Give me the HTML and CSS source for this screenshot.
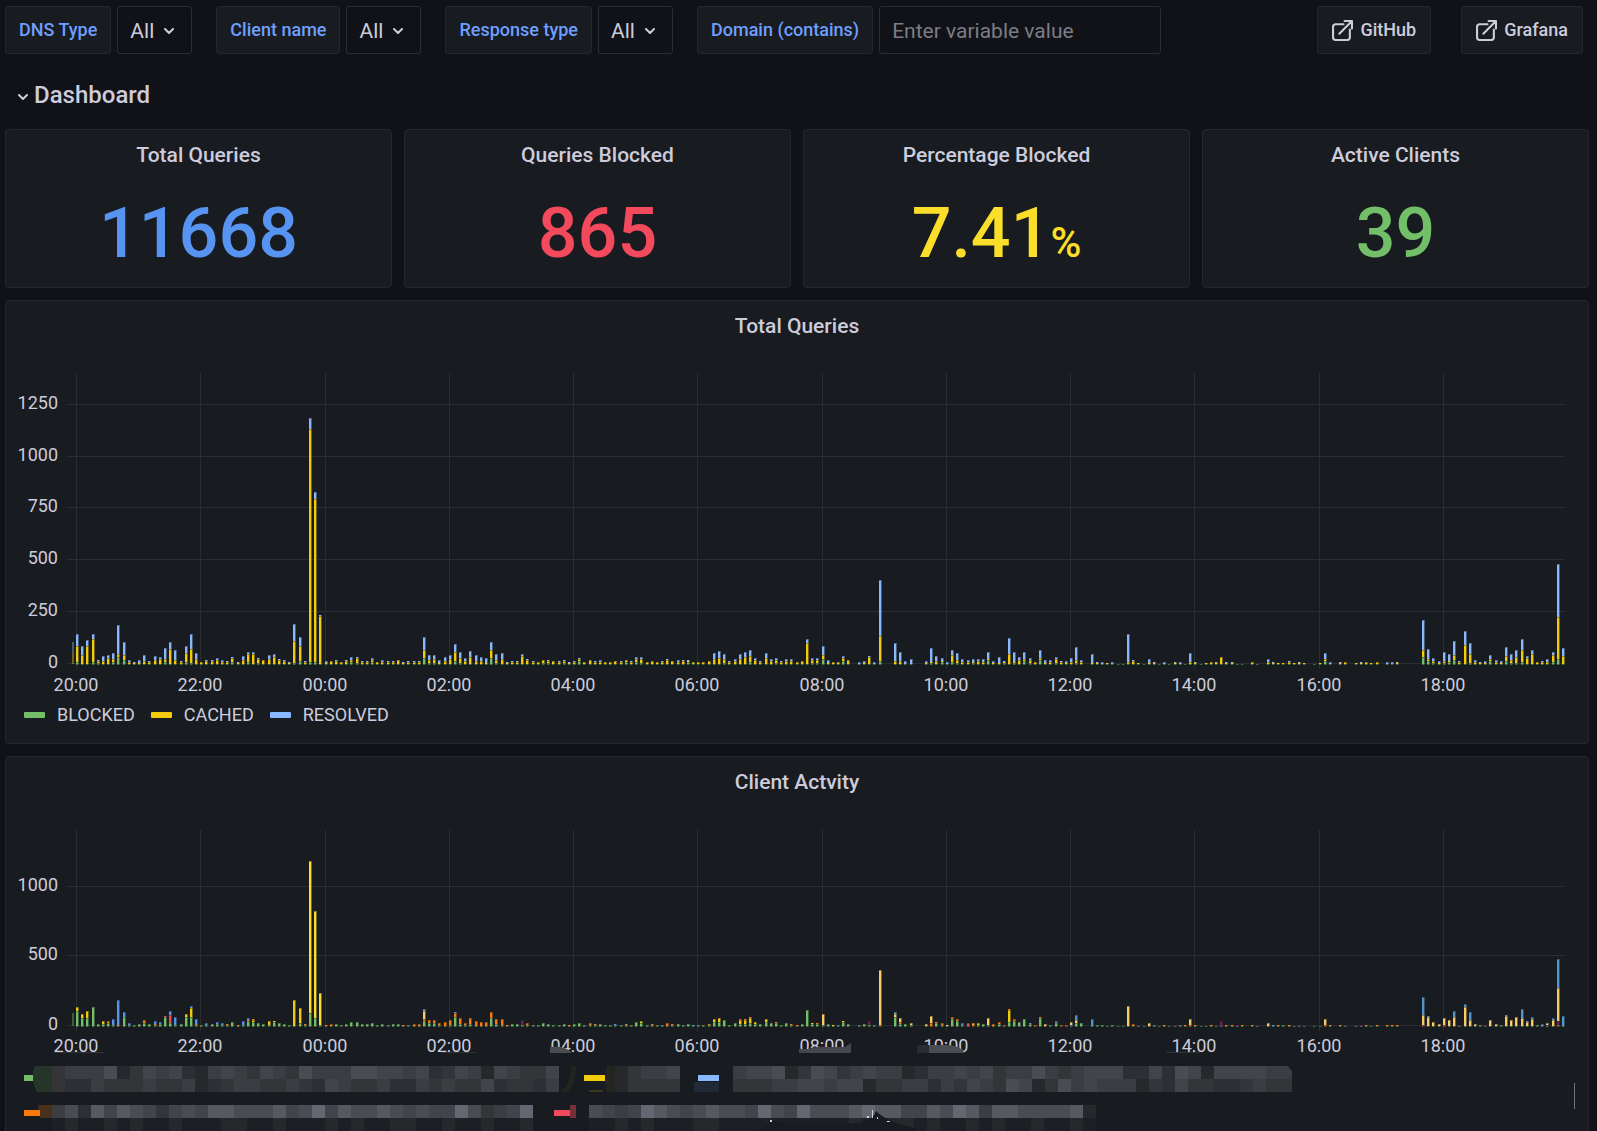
FILE: index.html
```
<!DOCTYPE html>
<html lang="en">
<head>
  <meta charset="utf-8">
  <title>DNS Dashboard</title>
  <link rel="stylesheet" href="styles.css">
</head>
<body>
  <div class="toolbar">
    <div class="variable">
      <label class="variable-label" for="dnsType">DNS Type</label>
      <div class="select-box">
        <select id="dnsType"><option>All</option></select>
        <svg class="chevron" viewBox="0 0 10 6"><path d="M1 1l4 4 4-4"/></svg>
      </div>
    </div>
    <div class="variable">
      <label class="variable-label" for="clientName">Client name</label>
      <div class="select-box">
        <select id="clientName"><option>All</option></select>
        <svg class="chevron" viewBox="0 0 10 6"><path d="M1 1l4 4 4-4"/></svg>
      </div>
    </div>
    <div class="variable">
      <label class="variable-label" for="responseType">Response type</label>
      <div class="select-box">
        <select id="responseType"><option>All</option></select>
        <svg class="chevron" viewBox="0 0 10 6"><path d="M1 1l4 4 4-4"/></svg>
      </div>
    </div>
    <div class="variable">
      <label class="variable-label" for="domain">Domain (contains)</label>
      <input type="text" id="domain" class="text-input" placeholder="Enter variable value">
    </div>
    <div class="links">
      <a class="link-button" href="#github">
        <svg class="icon" viewBox="0 0 20 20"><path d="M11 4H3.500Q1 4 1 6.500V16.500Q1 19 3.500 19H14.500Q17 19 17 16.500V9M7 13L18.500 1.500M12 1H19V8"/></svg>
        GitHub
      </a>
      <a class="link-button" href="#grafana">
        <svg class="icon" viewBox="0 0 20 20"><path d="M11 4H3.500Q1 4 1 6.500V16.500Q1 19 3.500 19H14.500Q17 19 17 16.500V9M7 13L18.500 1.500M12 1H19V8"/></svg>
        Grafana
      </a>
    </div>
  </div>

  <h1 class="row-title">
    <svg class="chevron" viewBox="0 0 10 6"><path d="M1 1l4 4 4-4"/></svg>
    Dashboard
  </h1>

  <div class="stats">
    <div class="panel">
      <h2 class="panel-title">Total Queries</h2>
      <div class="stat-value blue">11668</div>
    </div>
    <div class="panel">
      <h2 class="panel-title">Queries Blocked</h2>
      <div class="stat-value red">865</div>
    </div>
    <div class="panel">
      <h2 class="panel-title">Percentage Blocked</h2>
      <div class="stat-value yellow">7.41<span class="unit">%</span></div>
    </div>
    <div class="panel">
      <h2 class="panel-title">Active Clients</h2>
      <div class="stat-value green">39</div>
    </div>
  </div>

  <div class="panel chart-panel">
    <h2 class="panel-title">Total Queries</h2>
    <svg class="chart" id="queriesChart" height="345"></svg>
    <ul class="legend">
      <li><span class="swatch swatch-blocked"></span>BLOCKED</li>
      <li><span class="swatch swatch-cached"></span>CACHED</li>
      <li><span class="swatch swatch-resolved"></span>RESOLVED</li>
    </ul>
  </div>

  <div class="panel chart-panel">
    <h2 class="panel-title">Client Actvity</h2>
    <svg class="chart" id="clientsChart" height="251"></svg>
    <svg class="hidden-names" id="hiddenNames" height="82"></svg>
    <div class="scroll-thumb"></div>
  </div>

  <script src="charts.js"></script>
</body>
</html>
```

FILE: styles.css
```
:root {
  --background: #111217;
  --panel: #181b1f;
  --border: #25272c;
  --input-border: #2d2e34;
  --text: #ccccdc;
  --link: #6e9fff;
  --blue: #5794f2;
  --red: #f2495c;
  --yellow: #fade2a;
  --green: #73bf69;
}

* {
  box-sizing: border-box;
}

body {
  margin: 0;
  padding: 6px 8px 0 5px;
  height: 100vh;
  overflow: hidden;
  background: var(--background);
  color: var(--text);
  font-family: Roboto, "Liberation Sans", sans-serif;
  font-size: 18px;
}

.toolbar {
  display: flex;
  gap: 24px;
  padding-right: 6px;
}

.variable {
  display: flex;
  gap: 6px;
}

.variable-label, .link-button {
  display: flex;
  align-items: center;
  height: 48px;
  padding: 0 13px 2px;
  background: var(--panel);
  border: 1px solid var(--border);
  border-radius: 3px;
  font-weight: 500;
  white-space: nowrap;
}

.variable-label {
  color: var(--link);
}

.select-box {
  position: relative;
}

.select-box select, .text-input {
  height: 48px;
  padding: 2px 12px 0;
  background: var(--background);
  border: 1px solid var(--input-border);
  border-radius: 3px;
  color: var(--text);
  font-family: inherit;
  font-size: 21px;
}

.select-box select {
  appearance: none;
  width: 75px;
}

.text-input {
  width: 282px;
}

.text-input::placeholder {
  color: #7b7c86;
}

.chevron {
  width: 10px;
  height: 6px;
  fill: none;
  stroke: var(--text);
  stroke-width: 2;
  stroke-linecap: round;
  stroke-linejoin: round;
}

.select-box .chevron {
  position: absolute;
  right: 18px;
  top: 22px;
  pointer-events: none;
}

.links {
  display: flex;
  gap: 30px;
  margin-left: auto;
}

.link-button {
  gap: 7px;
  padding: 0 14px 2px;
  color: var(--text);
  text-decoration: none;
}

.icon {
  width: 21px;
  height: 21px;
  margin-top: 2px;
  fill: none;
  stroke: var(--text);
  stroke-width: 2;
  stroke-linecap: round;
  stroke-linejoin: round;
}

.row-title {
  display: flex;
  align-items: center;
  gap: 6px;
  margin: 24px 0 17px 13px;
  font-size: 24px;
  font-weight: 500;
  line-height: 34px;
}

.row-title .chevron {
  margin-top: 4px;
}

.stats {
  display: grid;
  grid-template-columns: repeat(4, 1fr);
  gap: 12px;
}

.panel {
  background: var(--panel);
  border: 1px solid var(--border);
  border-radius: 4px;
}

.panel-title {
  margin: 0;
  font-size: 21px;
  font-weight: 500;
  line-height: 50px;
  text-align: center;
}

.stat-value {
  height: 107px;
  font-size: 70px;
  font-weight: 500;
  line-height: 106px;
  text-align: center;
}

.unit {
  font-size: 42px;
}

.blue { color: var(--blue); }
.red { color: var(--red); }
.yellow { color: var(--yellow); }
.green { color: var(--green); }

.chart-panel {
  position: relative;
  margin-top: 12px;
}

.chart {
  display: block;
  width: 100%;
}

.chart text {
  fill: var(--text);
  font-size: 18px;
}

.legend {
  display: flex;
  gap: 16px;
  margin: 0;
  padding: 8px 18px 17px;
  list-style: none;
  line-height: 22px;
}

.legend li {
  display: flex;
  align-items: center;
  gap: 12px;
}

.swatch {
  width: 21px;
  height: 6px;
  border-radius: 1px;
}

.swatch-blocked { background: #73bf69; }
.swatch-cached { background: #f2cc0c; }
.swatch-resolved { background: #8ab8ff; }

.hidden-names {
  display: block;
  width: 100%;
}

/* scrollbar of the client legend */
.scroll-thumb {
  position: absolute;
  right: 13px;
  bottom: 31px;
  width: 1px;
  height: 26px;
  background: #707278;
}
```

FILE: charts.js
```
const COLORS = {
  G: '#73bf69', Y: '#f2cc0c', B: '#5794f2', S: '#8ab8ff', O: '#ff780a', R: '#f2495c',
  L: '#fade2a', T: '#f9cb6a', U: '#5195ce', P: '#6d1f62', C: '#64b0c8'
};
const HOURS = ['20:00', '22:00', '00:00', '02:00', '04:00', '06:00', '08:00', '10:00', '12:00', '14:00', '16:00', '18:00'];

// one entry per five minutes from 20:00: blocked,cached,resolved ("-" = no data)
const queries = `
3,16,12 1,9,9 1,18,6 3,23,5 2,2,1 1,3,5 1,6,3 3,3,6 8,3,29 5,5,13 1,2,2 1,1,1
1,1,3 1,3,6 1,2,1 1,4,4 1,5,2 3,3,11 1,15,7 1,4,10 1,2,1 3,9,7 2,14,15 1,5,6
1,2,0 1,3,1 1,3,1 1,4,2 1,2,2 1,2,1 3,4,1 1,1,1 1,4,4 3,8,2 1,10,2 2,4,1
1,4,0 1,5,4 1,7,3 1,4,1 1,3,1 1,1,1 2,22,17 4,15,9 1,2,1 3,233,11 3,163,7 1,48,1
1,1,2 1,3,0 1,3,1 1,2,0 1,3,1 3,2,3 2,5,1 1,2,1 1,2,1 3,2,2 1,2,0 1,2,2
1,2,1 1,2,1 1,4,0 1,1,1 1,2,1 1,2,1 1,2,1 7,8,13 2,3,5 2,4,4 1,1,3 1,3,4
1,5,4 4,9,8 2,5,6 1,3,3 1,7,6 1,3,6 1,3,4 1,1,5 7,8,8 2,3,6 1,5,6 1,1,1
1,2,1 1,2,1 1,8,2 1,4,1 1,2,1 1,2,0 2,3,0 2,2,1 1,3,0 1,2,1 2,2,1 1,1,1
1,2,1 4,2,1 1,2,0 1,4,0 1,2,1 1,2,2 1,2,0 1,2,0 1,3,0 1,2,1 3,2,0 1,2,1
3,3,2 2,4,2 1,2,0 1,3,0 1,2,0 1,2,1 1,4,1 1,3,0 1,2,2 1,3,1 3,1,1 1,2,0
1,2,0 1,2,0 1,3,0 1,5,6 1,6,7 2,4,5 1,2,1 1,3,2 1,5,5 1,7,5 3,6,6 1,4,2
1,2,1 1,6,5 1,3,2 2,3,2 1,2,1 1,3,2 1,3,2 1,2,0 1,3,0 1,21,4 2,3,2 2,3,2
6,4,9 1,1,3 1,2,0 1,2,0 4,3,2 1,4,0 - 1,0,2 1,1,2 1,7,1 1,0,2 4,25,56
- - 1,3,18 1,3,9 1,0,3 1,0,5 - - 1,1,2 2,1,14 1,3,5 3,1,3
1,0,2 3,7,5 2,3,7 1,2,3 1,2,2 2,1,3 1,3,2 1,2,3 5,1,7 1,1,2 1,1,6 2,1,1
1,10,16 2,1,10 1,4,3 4,2,7 2,3,2 1,2,0 5,2,8 1,1,3 1,2,2 2,4,2 1,2,1 1,1,2
1,2,4 2,3,13 1,2,2 - 1,1,9 1,1,1 1,0,2 1,1,0 1,0,2 1,0,0 1,0,0 1,2,28
1,3,1 1,1,0 1,0,0 1,1,4 1,1,1 1,0,0 1,0,2 1,0,0 1,1,1 1,0,2 1,0,0 1,2,9
1,1,1 1,0,0 1,1,0 1,2,0 1,1,1 1,7,0 1,1,1 1,1,1 1,0,0 1,0,0 - 1,2,0
1,0,0 - 1,2,3 1,1,1 1,1,0 1,1,0 1,2,1 1,1,0 1,1,1 1,1,0 - 1,0,0
1,1,0 4,2,6 1,0,2 - 1,1,1 1,2,0 - 1,1,0 1,1,1 1,2,0 1,1,0 1,2,0
- 1,0,2 1,0,2 1,1,1 - - - - 8,7,30 4,2,10 2,2,3 1,1,2
2,2,9 3,1,7 5,5,14 1,2,1 1,19,14 2,9,11 1,2,2 1,1,1 1,1,2 4,2,4 1,2,2 1,1,2
4,5,9 2,3,6 2,6,7 3,12,11 1,6,2 1,10,4 1,2,0 1,2,1 1,2,3 3,7,3 6,42,53 1,8,8`;

// the same slots, stacked by client
const clients = `
G16Y4 G9Y4 G9Y7 G20 G3 G3Y3 G4O2 G2B6 G1O1B25 G10B5 G2B2 G2
G3 G4O3 G3 G2O1B3 G3B2 G10R1 G4O2R6B4 G2B8 G3 G10Y3 G10Y9B2 G2O1B5
G2 G2B2 G3 G3B2 G2B2 G2O1 G5 G1O1 G2B4 G6O1B2 G5Y2O1 G4
G3 G2Y4 G5Y1 G4 G3 G2 G1Y26 G4Y15 G2O1 G14L152 G9L107 G2L32
G1O1 G1O2 G3 G2 G3 G5 G5 G3 G3 G4 G2 G3
G2 G3 G3 G1O1 G2 G1O2 G1O2 G6O2T8C2 G4O3 G4O3 G2O2 G1O4
G2O5 G10O4B1 G3O6 G2O2 G3O6 G1O5 G1O4 G1O4 G9O6 G3O5 G2O6 G1O1
G3 G3 G2P5 G2O2 G2 G2 G4 G3 G2 G2 G3 G1O1
G3 G4 G2 G2O2 G2O1 G3 G2 G2 G2B1 G2 G2O1 G2
G5 G4Y2 G2 G2O1 G2 G2 G1O3 G2O1 G3 G2 G3 G1B1
G2 G2 G2O1 G5Y3 G5Y4 G7 G2 G4 G3Y4R1 G3Y4O1 G4Y5O1 G3Y2
G3 G5Y3 G4 G4O1 G2 G4 G2O1 G1O1 G3 G17 G3Y1 G3O1
G2T11 G3 G1Y1 G2 G5Y1 G3 - G2 G3 G2P4 G2 O2T55
- - G10T3C2 G3O2T4 G3 G2T2 - - G1T2 O4T7 G4O1 G2O2
G1T1 G8O2 G6O2 G2B2 G1R3 O2Y2 G2Y2 G3 G2T7 G1O2 G3O2 O2
G5Y12O1 G6O2 G5 G8 G3U1 O2 G9O1 G1T2 G2 G4U2 O2 O2
U2T3 G4T3U5 G4 - G1U7 G2 G2 G1 G2 G1 G1 G1T20
G1O2 G1P1 G1 G1T3 G2 G1 G1O1 G1 G1P1 G2 G1O1 O2T6
G1O1 G1 G1 G1O1 G1 G1P5 G1O1 G1O1 G1P1 G1O1 - G1O1
G1 - G1T3 G1U1 G1O1 G2 G1O1 G1 G1P1 G1 - G1
G1 O2T6 G1O1 - G1O1 G1P1 - G1 G1P1 G1O1 G1 G1O1
- G1O1 G1O1 G1O1 - - - - R2T10U18 O1T9U1 G1T4 G1T2
O2T7 G1T6 O1T9U6 G1P1 G1T19U3 G1T6U8 G1T2 G2 G1P1 G1T6 G1T2 G2
G1T10U1 G1T6 G1T9 G1T8U9 G1T4U1 G1T7U2 G2 G1U2 G1P1T2 G1T6U2 O2P4T33U29 G1U10`;

function rect(x, y, w, h, color, opacity = 1) {
  return `<rect x="${x}" y="${y}" width="${w}" height="${h}" fill="${color}" opacity="${opacity}"/>`;
}

function bar(x, base, segments) {
  let out = '';
  let y = base;
  for (const [key, height] of segments) {
    if (!height) continue;
    y -= height;
    out += rect(x, y, 2, height, COLORS[key]) + rect(x + 2, y, 1, height, COLORS[key], 0.4);
    if (height > 1) out += rect(x, y, 2, 1, '#181b1f', 0.4);
  }
  return out + rect(x, base - 1, 3, 1, '#181b1f', 0.5);
}

function drawChart(svg, top, zero, labelGap, ticks, slots, first, overlay) {
  const width = svg.clientWidth;
  const left = 70;
  const right = width - 24;
  const base = zero + 2;
  const step = (right - left) / 287.4;
  let out = '';

  for (const [label, offset] of ticks) {
    out += rect(left - 9, zero - offset, right - left + 9, 1, '#2b2e31');
    out += `<text x="52" y="${zero - offset + 5}" text-anchor="end">${label}</text>`;
  }
  HOURS.forEach((hour, i) => {
    const x = Math.round(left + i * 24 * step);
    out += rect(x, top, 1, zero + 6 - top, '#2b2e31');
    out += `<text x="${x}" y="${zero + labelGap}" text-anchor="middle">${hour}</text>`;
  });
  // the slot before 20:00 is cut off by the plot edge
  out += `<g opacity="0.4">${first.map(([key, y, h]) => rect(left - 4, base - y, 2, h, COLORS[key])).join('')}</g>`;
  slots.forEach((segments, i) => {
    if (segments.length) out += bar(Math.round(left + i * step), base, segments);
  });
  svg.innerHTML = out + overlay;
}

const querySlots = queries.trim().split(/\s+/).map(slot =>
  slot === '-' ? [] : slot.split(',').map((n, i) => ['GYS'[i], +n]));
const clientSlots = clients.trim().split(/\s+/).map(slot =>
  [...slot.matchAll(/([A-Z])(\d+)/g)].map(m => [m[1], +m[2]]));

// edges of the pixelated area that reach over the time labels
const smudges = `
  <path d="M544 240q14-2 22 6h-22z" fill="#4a4c52"/>
  <path d="M793 242h10q6-3 18-2h18l6-4v10h-52z" fill="#45474d"/>
  <path d="M911 238h12v8h-12z" fill="#2a2c31"/>
  <path d="M923 238h20q12 1 16 8h-36z" fill="#4b4d54"/>
  <path d="M48 245h50v1h-50zM436 245h34v1h-34zM1160 245h34v1h-34z" fill="#303338"/>`;

// pixelated client names, 13px cells from dark to light
const SHADES = {
  a: '#1c1f23', b: '#26282c', c: '#2c2f36', d: '#333539', e: '#3b3d42', f: '#41444b', g: '#494c52', h: '#565960', i: '#666672'
};
function cells(x, y, keys) {
  return [...keys].map((key, i) => rect(x + i * 13, y, 13, 13, SHADES[key])).join('');
}

function drawNames(svg) {
  svg.innerHTML =
    '<path d="M29 8h17v26H31q-8-14-2-26z" fill="#26352a"/>' +
    cells(46, 8, 'deeegbdfefcbefedfedgeeeggffefcdfebfeddf') +
    cells(46, 21, 'dccedddeddebcdeeddedcfeddeccededdfcddce') +
    rect(18, 17, 9, 6, COLORS.G) +
    '<path d="M565 8h5q1 14-8 26h-7q10-8 10-26zM601 8h8v26h-8q-4-12 0-26z" fill="#24251f"/>' +
    rect(583, 32, 14, 2, '#3b3619') +
    cells(609, 8, 'bdeef') + cells(609, 21, 'bdddd') +
    rect(578, 17, 21, 6, COLORS.Y) + rect(692, 17, 21, 6, COLORS.S) + rect(688, 24, 25, 10, '#202a36') +
    cells(727, 8, 'effgbdgfdefeebceefefdeegedefffccfcgfbffffee') +
    cells(727, 21, 'dddeeffeffbddeecedfedgfbdgefeeebdcfddccdedd') +
    '<path d="M1282 8h4v5z" fill="#181b1f"/>' +
    '<path d="M32 47h14v13h-12z" fill="#48301b"/>' + rect(18, 52, 16, 6, COLORS.O) +
    cells(46, 47, 'egchfhgfdfgfhhggghfgifhgghgfgffigdefi') +
    cells(46, 60, 'abaababaabaaabbaabaaababaabbaabaabaab') +
    rect(548, 52, 16, 6, COLORS.R) + rect(564, 47, 6, 13, '#783038') +
    cells(583, 47, 'gfefihgfghggfigfiggghihhffhgihehhgggghb') +
    cells(583, 60, 'aababaaabbaaaaaaaaaabaabbabaababaabaaba') +
    '<path d="M750 73q12-4 16-10 40 7 84 2 16-1 20-12 12 12 40 17v3z" fill="#181b1f"/>' +
    '<path d="M764 62h2v2h-2zM861 58h2v2h-2zM866 52h1v8h-1zM871 59h1v2h-1zM881 63h3v1h-3z" fill="#d0d0da"/>';
}

function render() {
  drawChart(document.getElementById('queriesChart'), 22, 312, 28,
    [['0', 0], ['250', 52], ['500', 104], ['750', 156], ['1000', 207], ['1250', 259]],
    querySlots, [['Y', 12, 11], ['S', 23, 11]], '');
  drawChart(document.getElementById('clientsChart'), 23, 218, 27,
    [['0', 0], ['500', 70], ['1000', 139]],
    clientSlots, [['G', 14, 13]], smudges);
  drawNames(document.getElementById('hiddenNames'));
}

render();
window.addEventListener('resize', render);
```
